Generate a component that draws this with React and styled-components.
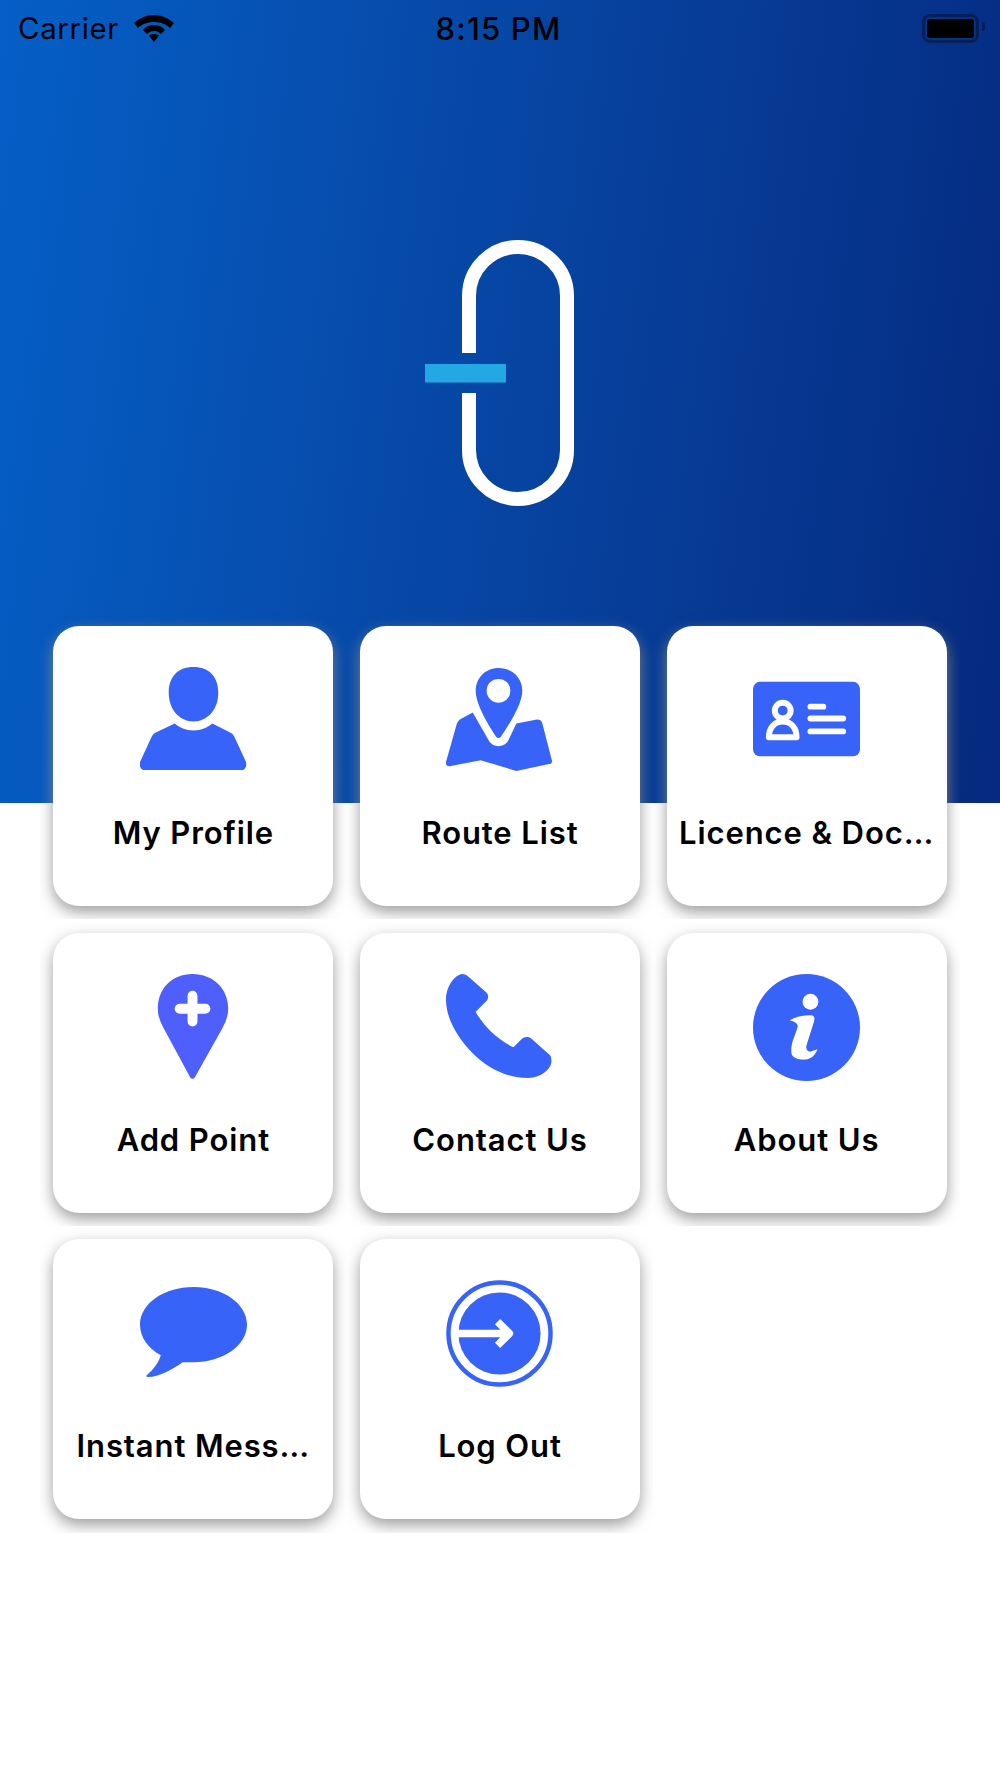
import React from "react";
import styled, { createGlobalStyle } from "styled-components";

const BLUE = "#3763f8";

const items = [
  { label: "My Profile", icon: <ProfileIcon /> },
  { label: "Route List", icon: <RouteIcon /> },
  { label: "Licence & Doc…", icon: <LicenceIcon /> },
  { label: "Add Point", icon: <AddPointIcon /> },
  { label: "Contact Us", icon: <PhoneIcon /> },
  { label: "About Us", icon: <InfoIcon /> },
  { label: "Instant Mess…", icon: <ChatIcon /> },
  { label: "Log Out", icon: <LogoutIcon /> },
];

function ProfileIcon() {
  return (
    <Icon viewBox="0 0 108 108">
      <path
        fill={BLUE}
        d="M54 0c16 0 25 10 25 26 0 17-11 29-25 29S29 43 29 26C29 10 38 0 54 0zM35 57c5 4 11 7 19 7s14-3 19-7l18 9c2 1 3 2 4 4l12 26c1 4-1 8-4 8H4c-3 0-5-4-4-8l12-26c1-2 2-3 4-4z"
      />
    </Icon>
  );
}

function RouteIcon() {
  return (
    <Icon viewBox="0 0 108 108">
      <path
        fill={BLUE}
        fillRule="evenodd"
        d="M53 1c14 0 24 10 24 23 0 14-14 35-22 47-1 1-3 1-4 0C43 59 30 38 30 24 30 11 40 1 53 1zm0 11a12 12 0 1 0 0 24 12 12 0 0 0 0-24z"
      />
      <path
        fill={BLUE}
        d="M27 46l16 28c4 8 16 8 20 0l8-17 21-4c3 0 4 1 5 3l10 39c0 2-1 3-3 3l-33 7-36-11-30 6c-4 1-6-2-5-4l11-39c1-2 2-3 3-4z"
      />
    </Icon>
  );
}

function LicenceIcon() {
  return (
    <Icon viewBox="0 0 108 108">
      <rect x="0" y="15" width="108" height="75" rx="7" fill={BLUE} />
      <g fill="none" stroke="#fff" strokeWidth="6" strokeLinecap="round" strokeLinejoin="round">
        <circle cx="30" cy="44" r="8" />
        <path d="M16 71c0-10 6-16 14-16s14 6 14 16z" />
        <path d="M58 40h13M58 52h33M58 65h33" />
      </g>
    </Icon>
  );
}

function AddPointIcon() {
  return (
    <Icon viewBox="0 0 108 108">
      <path fill="#4f5ffb" d="M53 0c21 0 36 15 36 35 0 8-3 14-6 20L55 105c-1 1-3 1-4 0L24 55c-3-6-6-12-6-20C18 15 32 0 53 0z" />
      <path fill="none" stroke="#fff" strokeWidth="10" strokeLinecap="round" d="M53 22v26M40 35h26" />
    </Icon>
  );
}

function PhoneIcon() {
  return (
    <Icon viewBox="0 0 108 108">
      <path
        fill={BLUE}
        d="M16 0c3 0 5 1 7 3l18 16c2 2 2 6 0 8L30 38c6 12 20 27 38 36l8-8c3-3 7-3 10-1l19 17c2 3 2 9-1 13-6 7-13 10-21 10-23 0-42-11-56-25C11 64 0 44 0 26 0 14 7 2 16 0z"
      />
    </Icon>
  );
}

function InfoIcon() {
  return (
    <Icon viewBox="0 0 108 108">
      <circle cx="54" cy="54" r="54" fill={BLUE} />
      <circle cx="58" cy="28" r="8" fill="#fff" />
      <path
        fill="#fff"
        d="M37 47c5-4 17-6 23-5 3 1 2 5 1 8l-7 22c-1 4 1 7 5 6 2-1 4-1 6-2-1 4-5 9-10 10-6 1-14 0-16-5-1-4 0-9 1-13l5-14c1-4-3-6-8-7z"
      />
    </Icon>
  );
}

function ChatIcon() {
  return (
    <Icon viewBox="0 0 108 108">
      <path
        fill={BLUE}
        d="M54 7c30 0 54 17 54 38S84 83 54 83c-5 0-9 0-11 0C33 90 19 98 8 98c-2 0-2-1-1-2 7-6 12-13 14-20C8 69 0 58 0 45 0 24 24 7 54 7z"
      />
    </Icon>
  );
}

function LogoutIcon() {
  return (
    <Icon viewBox="0 0 108 108">
      <circle cx="54" cy="54" r="51.500" fill="none" stroke={BLUE} strokeWidth="4.500" />
      <circle cx="54" cy="54" r="41.500" fill={BLUE} />
      <path fill="none" stroke="#fff" strokeWidth="7.500" strokeLinejoin="round" d="M6 54H63M52 42l12 12-12 12" />
    </Icon>
  );
}

function App() {
  return (
    <>
      <GlobalStyle />
      <Page>
        <Hero>
          <StatusBar>
            <StatusLeft>
              <Carrier>Carrier</Carrier>
              <WifiIcon viewBox="0 0 40 30">
                <path d="M20 2C12 2 6 5 0 10l4 5c4-4 10-6 16-6s12 2 16 6l4-5C34 5 28 2 20 2z" />
                <path d="M20 12c-5 0-8 1.500-11 5l4 4c2-2 4-3 7-3s5 1 7 3l4-4c-3-3.500-6-5-11-5z" />
                <path d="M20 21c-2 0-3 .5-5 1.500L20 29l5-6.500c-2-1-3-1.500-5-1.500z" />
              </WifiIcon>
            </StatusLeft>
            <Clock>8:15 PM</Clock>
            <Battery>
              <BatteryLevel />
            </Battery>
          </StatusBar>
          <Logo viewBox="0 0 149 266">
            <path
              d="M44 113V56a49 49 0 0 1 98 0v154a49 49 0 0 1-98 0v-57"
              fill="none"
              stroke="#fff"
              strokeWidth="14"
            />
            <rect x="0" y="124" width="81" height="18.500" fill="#22a9e3" />
          </Logo>
        </Hero>
        <Grid>
          {items.map((item) => (
            <Cell key={item.label}>
              <Card>
                {item.icon}
                <Label>{item.label}</Label>
              </Card>
            </Cell>
          ))}
        </Grid>
      </Page>
    </>
  );
}

const GlobalStyle = createGlobalStyle`
  html, body {
    margin: 0;
    padding: 0;
    background: #fff;
  }
`;

const Page = styled.div`
  width: 1000px;
  height: 1778px;
  overflow: hidden;
`;

const Hero = styled.div`
  height: 803px;
  background: linear-gradient(97deg, #055fc6 0%, #07429f 55%, #052a7f 100%);
`;

const StatusBar = styled.div`
  height: 54px;
  padding: 2px 21px 0 18px;
  box-sizing: border-box;
  display: grid;
  grid-template-columns: 1fr auto 1fr;
  align-items: center;
  color: #000;
  font-family: Inter, sans-serif;
  font-size: 29.5px;
`;

const StatusLeft = styled.div`
  display: flex;
  align-items: center;
  gap: 15px;
`;

const Carrier = styled.span`
  letter-spacing: 0.6px;
`;

const WifiIcon = styled.svg`
  width: 40px;
  height: 30px;
  fill: #000;
`;

const Clock = styled.div`
  font-size: 31px;
  font-weight: 500;
  letter-spacing: 1.2px;
`;

const Battery = styled.div`
  position: relative;
  justify-self: end;
  width: 57px;
  height: 29px;
  box-sizing: border-box;
  padding: 2px;
  border: 3px solid rgba(0, 0, 0, 0.35);
  border-radius: 8px;

  &::after {
    content: "";
    position: absolute;
    top: 5px;
    right: -9px;
    width: 3px;
    height: 9px;
    background: rgba(0, 0, 0, 0.35);
    border-radius: 0 2px 2px 0;
  }
`;

const BatteryLevel = styled.div`
  height: 100%;
  background: #000;
  border-radius: 3px;
`;

const Logo = styled.svg`
  display: block;
  width: 149px;
  height: 266px;
  margin: 186px 0 0 425px;
`;

const Grid = styled.div`
  display: grid;
  grid-template-columns: repeat(3, 306.67px);
  grid-auto-rows: 306.67px;
  margin: -190.33px 40px 0;
`;

const Cell = styled.div`
  padding: 13.33px;
  box-sizing: border-box;
  overflow: hidden;
`;

const Card = styled.div`
  height: 100%;
  background: #fff;
  border-radius: 26px;
  box-shadow: 0 6px 15px rgba(140, 140, 140, 0.85);
  display: flex;
  flex-direction: column;
  align-items: center;
  padding-top: 41px;
  box-sizing: border-box;
`;

const Icon = styled.svg`
  display: block;
  width: 107px;
  height: 107px;
  flex: none;
`;

const Label = styled.div`
  margin-top: 40px;
  max-width: 100%;
  font-family: Inter, sans-serif;
  font-size: 31px;
  font-weight: 600;
  letter-spacing: 0.9px;
  line-height: 38px;
  color: #000;
  white-space: nowrap;
  overflow: hidden;
  text-overflow: ellipsis;
`;

export default App;
